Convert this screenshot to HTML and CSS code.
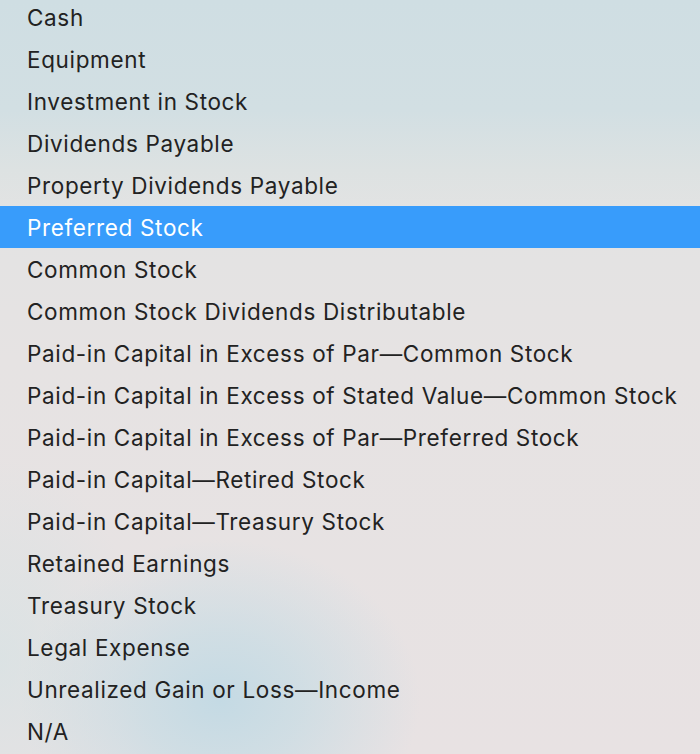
FILE: index.html
```html
<!DOCTYPE html>
<html lang="en">
<head>
<meta charset="utf-8">
<title>Accounts menu</title>
<link rel="stylesheet" href="styles.css">
</head>
<body>
<div class="menu">
  <ul class="menu-list">
    <li class="item">Cash</li>
    <li class="item">Equipment</li>
    <li class="item">Investment in Stock</li>
    <li class="item">Dividends Payable</li>
    <li class="item">Property Dividends Payable</li>
    <li class="item selected">Preferred Stock</li>
    <li class="item">Common Stock</li>
    <li class="item">Common Stock Dividends Distributable</li>
    <li class="item">Paid-in Capital in Excess of Par—Common Stock</li>
    <li class="item">Paid-in Capital in Excess of Stated Value—Common Stock</li>
    <li class="item">Paid-in Capital in Excess of Par—Preferred Stock</li>
    <li class="item">Paid-in Capital—Retired Stock</li>
    <li class="item">Paid-in Capital—Treasury Stock</li>
    <li class="item">Retained Earnings</li>
    <li class="item">Treasury Stock</li>
    <li class="item">Legal Expense</li>
    <li class="item">Unrealized Gain or Loss—Income</li>
    <li class="item">N/A</li>
  </ul>
</div>
</body>
</html>
```
FILE: styles.css
```css
html, body {
  margin: 0;
  padding: 0;
  width: 700px;
  height: 754px;
  overflow: hidden;
}

body {
  font-family: Inter, "Noto Sans", "Liberation Sans", sans-serif;
  color: #222222;
}

.menu {
  width: 700px;
  height: 754px;
  overflow: hidden;
  background:
    radial-gradient(ellipse 200px 160px at 220px 700px, rgba(196, 218, 228, 1) 0%, rgba(200, 220, 228, 0.75) 40%, rgba(226, 226, 228, 0) 100%),
    radial-gradient(ellipse 140px 200px at 0px 660px, rgba(214, 226, 228, 0.7) 0%, rgba(226, 226, 228, 0) 100%),
    linear-gradient(180deg, #cfdee3 0px, #d2dfe3 110px, #dde2e2 170px, #e3e3e3 215px, #e6e3e3 360px, #e8e2e3 754px);
}

.menu-list {
  list-style: none;
  margin: -4px 0 0 0;
  padding: 0;
}

.item {
  height: 42px;
  display: flex;
  align-items: center;
  padding-left: 27px;
  font-size: 22.5px;
  letter-spacing: 0.65px;
  white-space: nowrap;
}

.selected {
  background: #389cfb;
  color: #ffffff;
}
```
